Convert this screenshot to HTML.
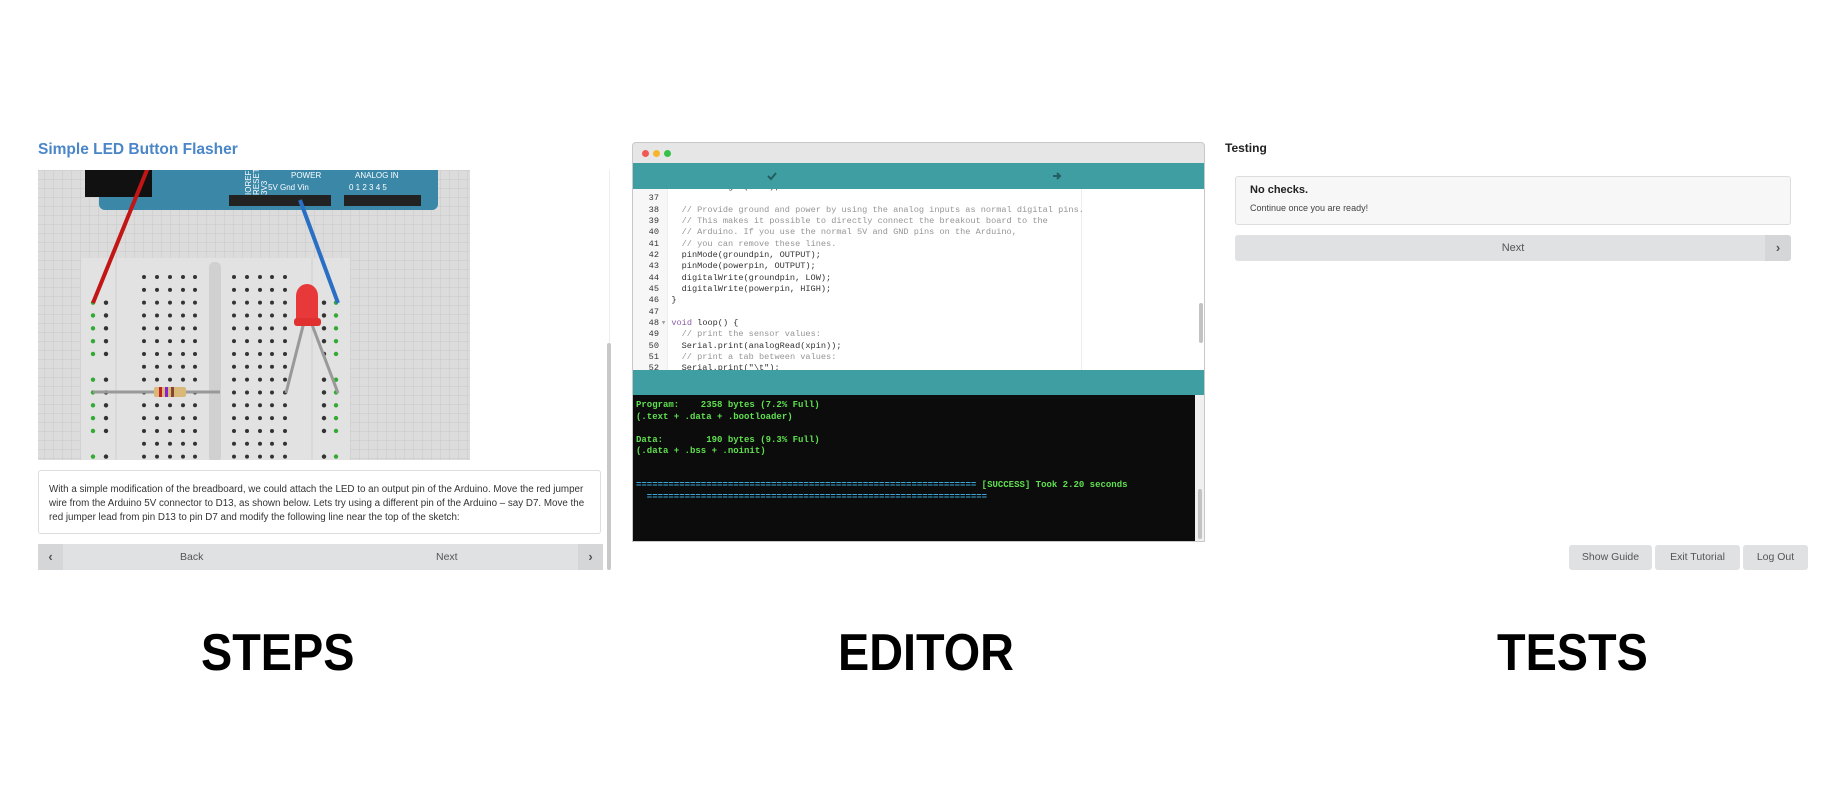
<!DOCTYPE html>
<html><head><meta charset="utf-8"><style>
*{margin:0;padding:0;box-sizing:border-box}
body{width:1835px;height:810px;background:#fff;position:relative;overflow:hidden;font-family:"Liberation Sans",sans-serif}
.a{position:absolute}
.lbl{position:absolute;top:627px;font-weight:bold;font-size:52px;color:#000;transform:scaleX(.9);transform-origin:left top;line-height:52px}
.btn{position:absolute;background:#e0e1e2;border-radius:3px;color:#555;font-size:11px;text-align:center}
.code{font-family:"Liberation Mono",monospace;font-size:8.6px;line-height:11.33px;white-space:pre}
.cm{color:#959595}.kw{color:#8a5ca8}
.con{font-family:"Liberation Mono",monospace;font-size:9px;line-height:11.5px;white-space:pre;color:#5fe04f;font-weight:bold}
</style></head><body>

<!-- STEPS panel -->
<div class="a" style="left:38px;top:141px;font-size:15.5px;font-weight:bold;color:#4a86c8">Simple LED Button Flasher</div>
<svg class="a" style="left:38px;top:170px" width="432" height="290" viewBox="38 170 432 290">
<defs><pattern id="g" width="9" height="9" patternUnits="userSpaceOnUse"><rect width="9" height="9" fill="#dcdcdc"/><path d="M9 0V9H0" fill="none" stroke="#c9c9c9" stroke-width="1"/></pattern></defs>
<rect x="38" y="170" width="432" height="290" fill="url(#g)"/>
<rect x="99" y="160" width="339" height="50" rx="6" fill="#3a87a8"/>
<rect x="85" y="160" width="67" height="37" fill="#111"/>
<rect x="229" y="195" width="102" height="11" fill="#222"/>
<rect x="344" y="195" width="77" height="11" fill="#222"/>
<g fill="#fff" font-size="8" font-family="Liberation Sans"><text x="291" y="178">POWER</text><text x="268" y="190">5V  Gnd  Vin</text><text x="355" y="178">ANALOG IN</text><text x="349" y="190">0  1  2  3  4  5</text>
<text transform="translate(251,195) rotate(-90)">IOREF</text><text transform="translate(259,195) rotate(-90)">RESET</text><text transform="translate(267,195) rotate(-90)">3V3</text></g>
<rect x="81" y="258" width="269" height="210" fill="#e2e2e2"/>
<rect x="209" y="262" width="12" height="200" rx="5" fill="#d0d0d0"/>
<line x1="116" y1="258" x2="116" y2="460" stroke="#cfcfcf"/><line x1="312" y1="258" x2="312" y2="460" stroke="#cfcfcf"/>
<g id="dots"></g>
<line x1="93" y1="392" x2="220" y2="392" stroke="#999" stroke-width="3"/>
<rect x="154" y="387" width="32" height="10" rx="2" fill="#d8b97a"/>
<rect x="159" y="387" width="3" height="10" fill="#b22"/><rect x="165" y="387" width="3" height="10" fill="#82c"/><rect x="171" y="387" width="3" height="10" fill="#843"/>
<line x1="149" y1="165" x2="93" y2="303" stroke="#c21616" stroke-width="4"/>
<line x1="300" y1="200" x2="338" y2="303" stroke="#2a6fc4" stroke-width="4"/>
<line x1="304" y1="322" x2="286" y2="393" stroke="#999" stroke-width="3"/>
<line x1="311" y1="322" x2="338" y2="393" stroke="#999" stroke-width="3"/>
<path d="M296 324V296a11 12 0 0 1 22 0V324z" fill="#e8393a"/><rect x="294" y="318" width="27" height="8" rx="3" fill="#e0302f"/>
</svg>
<script>
(function(){var g=document.getElementById('dots'),s='';
var main=[144,157,170,183,195,234,247,260,272,285],rail=[93,106,324,336],rr=[2,3,4,5,6,8,9,10,11,12,14];
for(var r=0;r<15;r++){var y=277+r*12.83;main.forEach(function(x){s+='<circle cx="'+x+'" cy="'+y+'" r="2" fill="#333"/>'});}
rr.forEach(function(r){var y=277+r*12.83;rail.forEach(function(x,i){var gr=(i==0||i==3);s+='<circle cx="'+x+'" cy="'+y+'" r="2.2" fill="'+(gr?'#3a3':'#333')+'"/>'})});
g.innerHTML=s;})();
</script>
<div class="a" style="left:38px;top:470px;width:563px;height:64px;border:1px solid #ddd;border-radius:3px;font-size:9.8px;line-height:14px;color:#333;padding:12px 0 0 10px;white-space:nowrap;overflow:hidden">With a simple modification of the breadboard, we could attach the LED to an output pin of the Arduino. Move the red jumper<br>wire from the Arduino 5V connector to D13, as shown below. Lets try using a different pin of the Arduino – say D7. Move the<br>red jumper lead from pin D13 to pin D7 and modify the following line near the top of the sketch:</div>
<div class="btn" style="left:38px;top:544px;width:565px;height:26px;line-height:26px"></div>
<div class="a" style="left:38px;top:544px;width:25px;height:26px;background:#d5d6d7;text-align:center;line-height:26px;font-weight:bold;color:#555;font-size:13px">‹</div>
<div class="a" style="left:578px;top:544px;width:25px;height:26px;background:#d5d6d7;text-align:center;line-height:26px;font-weight:bold;color:#555;font-size:13px">›</div>
<div class="a" style="left:180px;top:544px;line-height:26px;font-size:10.5px;color:#555">Back</div>
<div class="a" style="left:436px;top:544px;line-height:26px;font-size:10.5px;color:#555">Next</div>
<div class="a" style="left:607px;top:343px;width:4px;height:227px;background:#c8c8c8;border-radius:2px"></div>
<div class="a" style="left:609px;top:170px;width:1px;height:173px;background:#eee"></div>

<!-- EDITOR -->
<div class="a" style="left:632px;top:142px;width:573px;height:400px;border:1px solid #c8c8c8;border-radius:4px 4px 0 0;background:#e6e6e6;overflow:hidden">
 <div class="a" style="left:9px;top:7px;width:7px;height:7px;border-radius:50%;background:#f05a52"></div>
 <div class="a" style="left:20px;top:7px;width:7px;height:7px;border-radius:50%;background:#f5b52d"></div>
 <div class="a" style="left:31px;top:7px;width:7px;height:7px;border-radius:50%;background:#35c148"></div>
 <div class="a" style="left:0;top:20px;width:573px;height:26px;background:#3f9ea2"></div>
 <svg class="a" style="left:134px;top:28px" width="10" height="10"><path d="M1 5l3 3 5-6" fill="none" stroke="#235e60" stroke-width="2"/></svg>
 <svg class="a" style="left:419px;top:28px" width="10" height="10"><path d="M1 5h7M5 2l3 3-3 3" fill="none" stroke="#235e60" stroke-width="2"/></svg>
 <div class="a" style="left:0;top:46px;width:573px;height:181px;background:#fff;overflow:hidden">
  <div class="a" style="left:0;top:0;width:35px;height:181px;background:#f7f7f7;border-right:1px solid #eee"></div>
  <div class="a" style="left:448px;top:0;width:1px;height:181px;background:#eee"></div>
  <div class="a code" style="left:0;top:-7px;width:26px;text-align:right;color:#333">36
37
38
39
40
41
42
43
44
45
46
47
48
49
50
51
52</div>
  <div class="a code" style="left:28px;top:-7px;color:#333">    Serial.begin(9600);

    <span class="cm">// Provide ground and power by using the analog inputs as normal digital pins.</span>
    <span class="cm">// This makes it possible to directly connect the breakout board to the</span>
    <span class="cm">// Arduino. If you use the normal 5V and GND pins on the Arduino,</span>
    <span class="cm">// you can remove these lines.</span>
    pinMode(groundpin, OUTPUT);
    pinMode(powerpin, OUTPUT);
    digitalWrite(groundpin, LOW);
    digitalWrite(powerpin, HIGH);
  }

<span style="color:#999">▾</span> <span class="kw">void</span> loop() {
    <span class="cm">// print the sensor values:</span>
    Serial.print(analogRead(xpin));
    <span class="cm">// print a tab between values:</span>
    Serial.print("\t");</div>
  <div class="a" style="left:566px;top:114px;width:4px;height:40px;background:#c3c3c3;border-radius:2px"></div>
 </div>
 <div class="a" style="left:0;top:227px;width:573px;height:25px;background:#3f9ea2"></div>
 <div class="a" style="left:0;top:252px;width:562px;height:150px;background:#0c0c0c"></div>
 <div class="a" style="left:562px;top:252px;width:11px;height:150px;background:#f0f0f0"></div>
 <div class="a" style="left:565px;top:346px;width:4px;height:50px;background:#c3c3c3;border-radius:2px"></div>
 <div class="a con" style="left:3px;top:257px">Program:    2358 bytes (7.2% Full)
(.text + .data + .bootloader)

Data:        190 bytes (9.3% Full)
(.data + .bss + .noinit)</div>
 <div class="a con" style="left:3px;top:337px"><span style="color:#3aa7d8">===============================================================</span> [SUCCESS] Took 2.20 seconds
 <span style="color:#3aa7d8"> ===============================================================</span></div>
</div>

<!-- TESTS -->
<div class="a" style="left:1225px;top:141px;font-size:12px;font-weight:bold;color:#222">Testing</div>
<div class="a" style="left:1235px;top:176px;width:556px;height:49px;background:#f7f7f7;border:1px solid #ddd;border-radius:3px"></div>
<div class="a" style="left:1250px;top:184px;font-size:11px;font-weight:bold;color:#222">No checks.</div>
<div class="a" style="left:1250px;top:203px;font-size:9px;color:#444">Continue once you are ready!</div>
<div class="btn" style="left:1235px;top:235px;width:556px;height:26px;line-height:26px">Next</div>
<div class="a" style="left:1765px;top:235px;width:26px;height:26px;background:#d5d6d7;text-align:center;line-height:26px;font-weight:bold;color:#555;font-size:13px;border-radius:0 3px 3px 0">›</div>
<div class="btn" style="left:1569px;top:545px;width:83px;height:25px;line-height:25px;font-size:10.5px">Show Guide</div>
<div class="btn" style="left:1655px;top:545px;width:85px;height:25px;line-height:25px;font-size:10.5px">Exit Tutorial</div>
<div class="btn" style="left:1743px;top:545px;width:65px;height:25px;line-height:25px;font-size:10.5px">Log Out</div>

<div class="lbl" style="left:201px">STEPS</div>
<div class="lbl" style="left:838px">EDITOR</div>
<div class="lbl" style="left:1497px">TESTS</div>
</body></html>
